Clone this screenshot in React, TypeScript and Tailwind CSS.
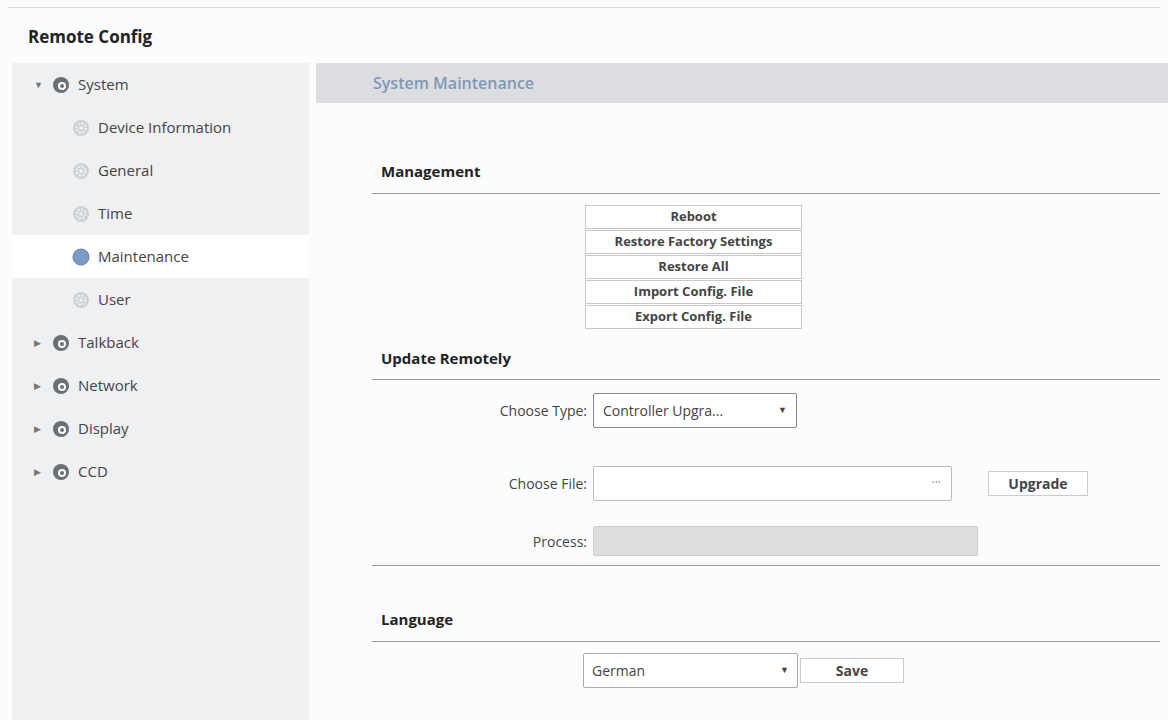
import React from "react";

const Globe = ({ dark }: { dark?: boolean }) => (
  <svg width="18" height="18" viewBox="0 0 18 18">
    <circle cx="9" cy="9" r="8" fill={dark ? "#6b7075" : "#c9ccd0"} />
    <circle cx="10" cy="10" r="4" fill="#fff" />
    <circle cx="10" cy="10" r="2" fill={dark ? "#6b7075" : "#c9ccd0"} />
  </svg>
);

const Gear = ({ active }: { active?: boolean }) =>
  active ? (
    <svg width="18" height="18" viewBox="0 0 18 18">
      <circle cx="9" cy="9" r="8" fill="#7c9cc4" />
      <circle cx="9" cy="9" r="8" fill="none" stroke="#5f82ad" strokeWidth="1" />
    </svg>
  ) : (
    <svg width="18" height="18" viewBox="0 0 18 18">
      <circle cx="9" cy="9" r="8" fill="#cfd2d5" />
      <circle cx="9" cy="9" r="4.5" fill="none" stroke="#f2f3f4" strokeWidth="2" strokeDasharray="2 1.5" />
      <circle cx="9" cy="9" r="1.8" fill="#f2f3f4" />
    </svg>
  );

const Top = ({ label, open }: { label: string; open?: boolean }) => (
  <div className="flex items-center h-[43px] pl-[22px]">
    <span className="w-[14px] text-[9px] text-[#777]">{open ? "▼" : "▶"}</span>
    <span className="ml-[4px]"><Globe dark /></span>
    <span className="ml-[8px] text-[15px] text-[#444]">{label}</span>
  </div>
);

const Sub = ({ label, active }: { label: string; active?: boolean }) => (
  <div className={`flex items-center h-[43px] pl-[60px] ${active ? "bg-white" : ""}`}>
    <Gear active={active} />
    <span className="ml-[8px] text-[15px] text-[#444]">{label}</span>
  </div>
);

const Section = ({ title }: { title: string }) => (
  <div className="ml-[56px] mr-[8px] border-b border-[#999] pb-[10px] pl-[9px] text-[15px] font-bold text-[#222]">{title}</div>
);

export default function App() {
  return (
    <div className="w-[1168px] h-[720px] bg-[#fbfcfd] overflow-hidden" style={{ fontFamily: "'Open Sans', 'Noto Sans', sans-serif" }}>
      <div className="mt-[7px] mx-[8px] border-t border-[#dcdcdc]" />
      <div className="h-[55px] pl-[28px] pt-[16px] text-[17px] font-bold text-[#222]">Remote Config</div>
      <div className="flex gap-[7px]">
        <div className="ml-[12px] w-[297px] h-[660px] bg-[#eef0f2]">
          <Top label="System" open />
          <Sub label="Device Information" />
          <Sub label="General" />
          <Sub label="Time" />
          <Sub label="Maintenance" active />
          <Sub label="User" />
          <Top label="Talkback" />
          <Top label="Network" />
          <Top label="Display" />
          <Top label="CCD" />
        </div>
        <div className="flex-1">
          <div className="h-[40px] bg-[#dcdde0] rounded-tl-[3px] flex items-center pl-[57px] text-[16px] font-semibold text-[#7f98b8]">System Maintenance</div>
          <div className="h-[57px]" />
          <Section title="Management" />
          <div className="flex flex-col items-start ml-[269px] mt-[11px] gap-[1px]">
            {["Reboot", "Restore Factory Settings", "Restore All", "Import Config. File", "Export Config. File"].map((b) => (
              <div key={b} className="w-[217px] h-[24px] border border-[#c8c8c8] bg-white flex items-center justify-center text-[13px] font-bold text-[#444]">{b}</div>
            ))}
          </div>
          <div className="h-[18px]" />
          <Section title="Update Remotely" />
          <div className="flex items-center mt-[12px] h-[36px]">
            <div className="w-[277px] text-right text-[14px] text-[#444] pr-[6px]">Choose Type:</div>
            <div className="w-[204px] h-[35px] border border-[#888] rounded-[2px] bg-white flex items-center px-[9px] text-[14px] text-[#444]">
              <span className="flex-1">Controller Upgra...</span><span className="text-[9px]">▼</span>
            </div>
          </div>
          <div className="flex items-center mt-[37px] h-[36px]">
            <div className="w-[277px] text-right text-[14px] text-[#444] pr-[6px]">Choose File:</div>
            <div className="w-[359px] h-[35px] border border-[#bbb] rounded-[2px] bg-white flex items-center justify-end pr-[10px] text-[12px] text-[#888]">···</div>
            <div className="ml-[36px] w-[100px] h-[25px] border border-[#ccc] bg-white flex items-center justify-center text-[14px] font-bold text-[#444]">Upgrade</div>
          </div>
          <div className="flex items-center mt-[25px] h-[30px]">
            <div className="w-[277px] text-right text-[14px] text-[#444] pr-[6px]">Process:</div>
            <div className="w-[385px] h-[30px] border border-[#ccc] rounded-[2px] bg-[#dddddd]" />
          </div>
          <div className="ml-[56px] mr-[8px] mt-[9px] border-b border-[#999]" />
          <div className="h-[42px]" />
          <Section title="Language" />
          <div className="flex items-center mt-[11px] ml-[267px]">
            <div className="w-[215px] h-[35px] border border-[#aaa] rounded-[2px] bg-white flex items-center px-[8px] text-[14px] text-[#444]">
              <span className="flex-1">German</span><span className="text-[9px]">▼</span>
            </div>
            <div className="ml-[2px] w-[104px] h-[25px] border border-[#ccc] bg-white flex items-center justify-center text-[14px] font-bold text-[#444]">Save</div>
          </div>
        </div>
      </div>
    </div>
  );
}
